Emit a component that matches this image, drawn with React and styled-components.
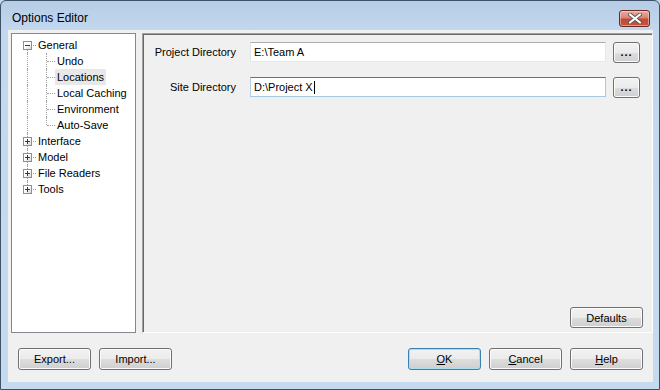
import React from "react";
import styled, { createGlobalStyle, css } from "styled-components";

const GlobalStyle = createGlobalStyle`
  html, body {
    margin: 0;
    padding: 0;
    background: #c4d8ee;
  }
  * {
    box-sizing: border-box;
  }
`;

const Window = styled.div`
  width: 660px;
  height: 390px;
  display: flex;
  flex-direction: column;
  border: 1px solid #3e5368;
  border-radius: 6px 6px 0 0;
  background: linear-gradient(#b6cde6 0px, #c3d8ee 30px, #c6daef 100%);
  font-family: "Liberation Sans", Arial, sans-serif;
  font-size: 11px;
  color: #000;
`;

const TitleBar = styled.div`
  height: 29px;
  display: flex;
  align-items: center;
  padding: 0 9px 0 11px;
`;

const Title = styled.div`
  flex: 1;
  font-size: 12px;
  margin-top: 4px;
`;

const CloseButton = styled.div`
  width: 31px;
  height: 17px;
  margin-top: 6px;
  border: 1px solid #6a2b22;
  border-radius: 3px;
  display: flex;
  align-items: center;
  justify-content: center;
  background: linear-gradient(#e8b0a6 0%, #d78474 45%, #c24a35 55%, #c3553f 100%);
  box-shadow: inset 0 0 0 1px rgba(255, 220, 210, 0.5);
`;

const Client = styled.div`
  flex: 1;
  margin: 0 6px 7px 7px;
  background: #f0f0f0;
  display: flex;
  flex-direction: column;
`;

const Body = styled.div`
  display: flex;
  gap: 6px;
  padding: 3px 0 0 3px;
  height: 303px;
`;

const Tree = styled.div`
  width: 125px;
  height: 300px;
  border: 1px solid #828790;
  background: #fff;
  padding: 3px 0 0 5px;
`;

const TreeRow = styled.div`
  display: flex;
  align-items: center;
  height: 16px;
`;

const lineStyles = {
  full: css`top: 0; height: 16px;`,
  top: css`top: 0; height: 8px;`,
  bottom: css`top: 8px; height: 8px;`,
};

const Cell = styled.span`
  position: relative;
  width: 19px;
  height: 16px;
  flex: none;
  display: flex;
  align-items: center;

  &::before {
    content: "";
    position: absolute;
    left: 10px;
    border-left: 1px dotted #a0a0a0;
    ${(p) => (p.$line ? lineStyles[p.$line] : "display: none;")}
  }

  &::after {
    content: "";
    position: absolute;
    left: 11px;
    top: 8px;
    width: 8px;
    border-top: 1px dotted #a0a0a0;
    ${(p) => !p.$h && "display: none;"}
  }
`;

const ExpandBox = styled.span`
  position: relative;
  z-index: 1;
  margin-left: 6px;
  margin-top: 1px;
  width: 9px;
  height: 9px;
  border: 1px solid #8e8f8f;
  background: linear-gradient(135deg, #ffffff 45%, #d4d4d4 100%);
  display: flex;
`;

const TreeLabel = styled.span`
  padding: 0 2px;
  line-height: 16px;
  white-space: nowrap;
  background: ${(p) => (p.$selected ? "#e8e8e8" : "transparent")};
`;

const Panel = styled.div`
  flex: 1;
  height: 300px;
  display: flex;
  flex-direction: column;
  border-left: 1px solid #a0a0a0;
  border-top: 1px solid #a0a0a0;
  border-right: 1px solid #fff;
  border-bottom: 1px solid #fff;
  box-shadow: inset 1px 1px 0 #696969;
  padding: 8px 12px 4px 7px;
`;

const FieldList = styled.div`
  display: flex;
  flex-direction: column;
  gap: 15px;
  flex: 1;
`;

const FieldRow = styled.div`
  display: flex;
  align-items: center;
  height: 20px;
`;

const FieldLabel = styled.span`
  width: 86px;
  margin-right: 14px;
  text-align: right;
  white-space: nowrap;
`;

const Field = styled.div`
  flex: 1;
  height: 20px;
  display: flex;
  align-items: center;
  padding-left: 3px;
  background: #fff;
  border: 1px solid ${(p) => (p.$focused ? "#a4c9e3" : "#e3e9ef")};
  border-top-color: ${(p) => (p.$focused ? "#3d7bad" : "#abadb3")};
  border-left-color: ${(p) => (p.$focused ? "#b5cfe7" : "#e2e3ea")};
`;

const Caret = styled.span`
  width: 1px;
  height: 13px;
  background: #000;
  margin-left: 1px;
`;

const Button = styled.button`
  width: ${(p) => p.$w || 73}px;
  height: ${(p) => p.$h || 22}px;
  margin: 0;
  padding: 0;
  font-family: "Liberation Sans", Arial, sans-serif;
  font-size: 11px;
  color: #000;
  border: 1px solid ${(p) => (p.$default ? "#3c7fb1" : "#707070")};
  border-radius: 3px;
  background: linear-gradient(#f2f2f2 0%, #ebebeb 50%, #dddddd 51%, #cfcfcf 100%);
  box-shadow: inset 0 0 0 1px ${(p) => (p.$default ? "#a5e0f7" : "#fbfbfb")};
  flex: none;

  u {
    text-decoration: underline;
  }
`;

const DotsButton = styled(Button)`
  margin-left: 7px;
  font-weight: bold;
  letter-spacing: 1px;
`;

const PanelFooter = styled.div`
  display: flex;
  justify-content: flex-end;
  margin-right: -3px;
`;

const Footer = styled.div`
  flex: 1;
  display: flex;
  align-items: flex-start;
  padding: 15px 10px 0 10px;
  gap: 8px;
`;

const Spacer = styled.div`
  flex: 1;
`;

const treeItems = [
  { label: "General", cells: [{ line: "bottom", h: true, box: "minus" }] },
  { label: "Undo", cells: [{ line: "full" }, { line: "full", h: true }] },
  { label: "Locations", selected: true, cells: [{ line: "full" }, { line: "full", h: true }] },
  { label: "Local Caching", cells: [{ line: "full" }, { line: "full", h: true }] },
  { label: "Environment", cells: [{ line: "full" }, { line: "full", h: true }] },
  { label: "Auto-Save", cells: [{ line: "full" }, { line: "top", h: true }] },
  { label: "Interface", cells: [{ line: "full", h: true, box: "plus" }] },
  { label: "Model", cells: [{ line: "full", h: true, box: "plus" }] },
  { label: "File Readers", cells: [{ line: "full", h: true, box: "plus" }] },
  { label: "Tools", cells: [{ line: "top", h: true, box: "plus" }] },
];

function Sign({ type }) {
  return (
    <svg width="7" height="7" viewBox="0 0 7 7">
      <rect x="1" y="3" width="5" height="1" fill="#1f3b63" />
      {type === "plus" && <rect x="3" y="1" width="1" height="5" fill="#1f3b63" />}
    </svg>
  );
}

function CloseIcon() {
  return (
    <svg width="14" height="11" viewBox="0 0 14 11">
      <path
        d="M2 1.5 L12 9.5 M12 1.5 L2 9.5"
        stroke="#5a5a5a"
        strokeWidth="4"
        strokeLinecap="round"
      />
      <path
        d="M2 1.5 L12 9.5 M12 1.5 L2 9.5"
        stroke="#ffffff"
        strokeWidth="2.2"
        strokeLinecap="round"
      />
    </svg>
  );
}

function App() {
  return (
    <>
      <GlobalStyle />
      <Window>
        <TitleBar>
          <Title>Options Editor</Title>
          <CloseButton>
            <CloseIcon />
          </CloseButton>
        </TitleBar>
        <Client>
          <Body>
            <Tree>
              {treeItems.map((item) => (
                <TreeRow key={item.label}>
                  {item.cells.map((c, i) => (
                    <Cell key={i} $line={c.line} $h={c.h}>
                      {c.box && (
                        <ExpandBox>
                          <Sign type={c.box} />
                        </ExpandBox>
                      )}
                    </Cell>
                  ))}
                  <TreeLabel $selected={item.selected}>{item.label}</TreeLabel>
                </TreeRow>
              ))}
            </Tree>
            <Panel>
              <FieldList>
                <FieldRow>
                  <FieldLabel>Project Directory</FieldLabel>
                  <Field>E:\Team A</Field>
                  <DotsButton $w={27} $h={21}>...</DotsButton>
                </FieldRow>
                <FieldRow>
                  <FieldLabel>Site Directory</FieldLabel>
                  <Field $focused>
                    D:\Project X
                    <Caret />
                  </Field>
                  <DotsButton $w={27} $h={21}>...</DotsButton>
                </FieldRow>
              </FieldList>
              <PanelFooter>
                <Button $h={21}>Defaults</Button>
              </PanelFooter>
            </Panel>
          </Body>
          <Footer>
            <Button>Export...</Button>
            <Button>Import...</Button>
            <Spacer />
            <Button $default>
              <u>O</u>K
            </Button>
            <Button>
              <u>C</u>ancel
            </Button>
            <Button>
              <u>H</u>elp
            </Button>
          </Footer>
        </Client>
      </Window>
    </>
  );
}

export default App;
